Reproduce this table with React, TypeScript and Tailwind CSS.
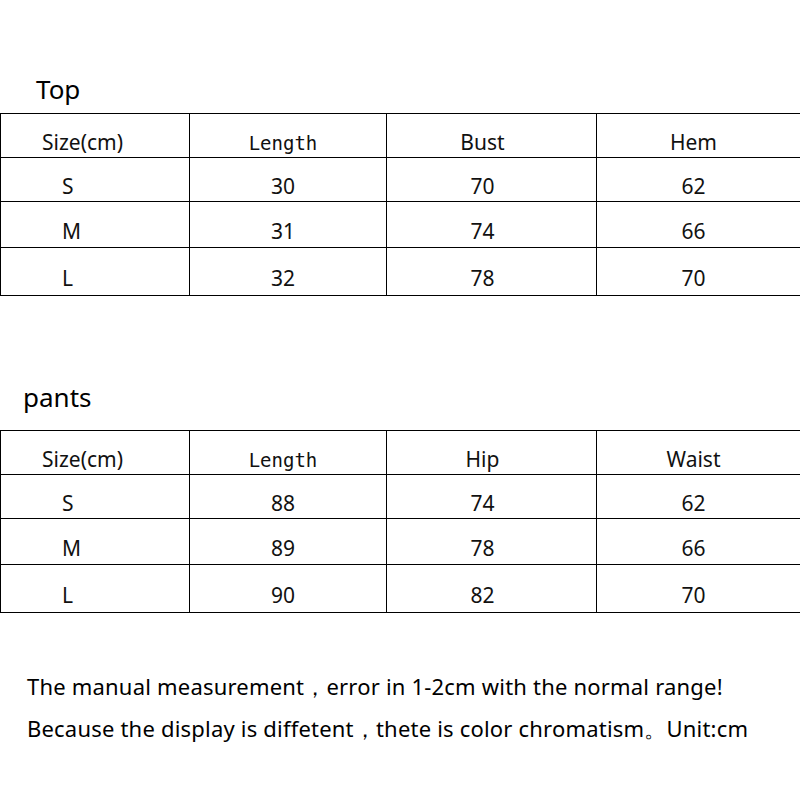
import React from 'react';

interface SizeTableProps {
  headers: string[];
  rows: string[][];
}

const rowHeights = ['h-[44px]', 'h-[44px]', 'h-[46px]', 'h-[48px]'];
const colPad = ['', 'pr-[10px]', 'pr-[18px]', 'pr-[10px]'];

const SizeTable: React.FC<SizeTableProps> = ({ headers, rows }) => {
  const all = [headers, ...rows];
  return (
    <table className="w-[800px] border-collapse table-fixed text-[21px] leading-[28px] text-[#111]">
      <colgroup>
        <col className="w-[189px]" />
        <col className="w-[197px]" />
        <col className="w-[210px]" />
        <col className="w-[204px]" />
      </colgroup>
      <tbody>
        {all.map((row, i) => (
          <tr key={i} className={rowHeights[i]}>
            {row.map((cell, j) => (
              <td
                key={j}
                className={
                  'border border-black p-0 pt-[13px] ' +
                  (j === 0
                    ? i === 0
                      ? 'pl-[41px] text-left'
                      : 'pl-[61px] text-left'
                    : 'text-center ' + colPad[j])
                }
              >
                <span
                  className={
                    j === 1 && i === 0
                      ? "font-['DejaVu_Sans_Mono',monospace] text-[19px]"
                      : ''
                  }
                >
                  {cell}
                </span>
              </td>
            ))}
          </tr>
        ))}
      </tbody>
    </table>
  );
};

export default function App() {
  return (
    <div className="w-[800px] h-[800px] bg-white font-['Noto_Sans',sans-serif] text-black overflow-hidden">
      {/* Top */}
      <div className="pt-[72px] pl-[36px] text-[26px] leading-[34px] h-[113px]">Top</div>
      <SizeTable
        headers={['Size(cm)', 'Length', 'Bust', 'Hem']}
        rows={[
          ['S', '30', '70', '62'],
          ['M', '31', '74', '66'],
          ['L', '32', '78', '70'],
        ]}
      />

      {/* Pants */}
      <div className="pt-[84px] pl-[23px] text-[26px] leading-[34px] h-[134px]">pants</div>
      <SizeTable
        headers={['Size(cm)', 'Length', 'Hip', 'Waist']}
        rows={[
          ['S', '88', '74', '62'],
          ['M', '89', '78', '66'],
          ['L', '90', '82', '70'],
        ]}
      />

      {/* Notes */}
      <div className="pt-[58px] pl-[27px] flex flex-col gap-[12px] text-[22px] leading-[30px] tracking-[0.2px]">
        <p>The manual measurement，error in 1-2cm with the normal range!</p>
        <p>Because the display is diffetent，thete is color chromatism。Unit:cm</p>
      </div>
    </div>
  );
}
